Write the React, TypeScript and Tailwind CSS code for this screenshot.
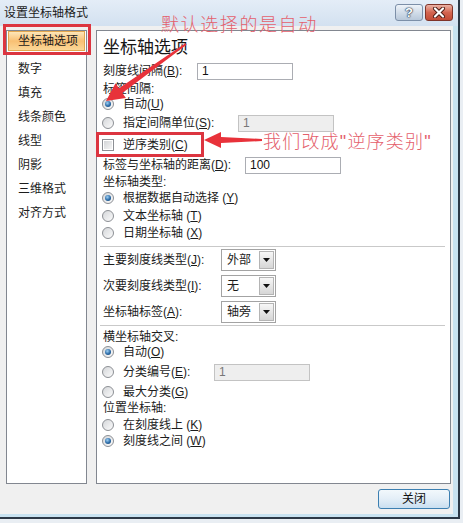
import { ReactNode } from 'react'

function Key({ k }: { k: string }) {
  return (
    <>
      (<span className="underline underline-offset-1">{k}</span>)
    </>
  )
}

function Radio({ on }: { on?: boolean }) {
  return (
    <div className="w-[12px] h-[12px] shrink-0 rounded-full border border-[#8c8f94] bg-gradient-to-br from-[#d5d7da] to-[#fbfbfb] flex items-center justify-center">
      {on && (
        <div className="w-[6px] h-[6px] rounded-full bg-[radial-gradient(circle_at_40%_35%,#9fd0f4,#2a6aa6_55%,#173f6b)]" />
      )}
    </div>
  )
}

function Check() {
  return (
    <div className="w-[12px] h-[12px] shrink-0 border border-[#8c8f94] bg-white p-px">
      <div className="w-full h-full bg-gradient-to-br from-[#d3d5d8] to-[#f5f5f5]" />
    </div>
  )
}

function Box({ v, w, off }: { v: string; w: string; off?: boolean }) {
  return (
    <div
      className={
        off
          ? `${w} h-[17px] border border-[#c3c3c3] bg-[#eeeeee] text-[#777] flex items-center pl-[4px] text-[12px]`
          : `${w} h-[17px] border border-[#abadb3] bg-white text-[#111] flex items-center pl-[4px] text-[12px]`
      }
    >
      {v}
    </div>
  )
}

function Drop({ v }: { v: string }) {
  return (
    <div className="w-[55px] h-[22px] border border-[#a3a3a3] bg-white flex p-px">
      <div className="flex-1 flex items-center pl-[4px] text-[12px]">{v}</div>
      <div className="w-[15px] border border-[#b4b4b4] bg-gradient-to-b from-[#f7f7f7] to-[#d6d6d6] flex items-center justify-center">
        <svg width="7" height="4" viewBox="0 0 7 4">
          <path d="M0 0 L7 0 L3.5 4 Z" fill="#111" />
        </svg>
      </div>
    </div>
  )
}

function RadioRow({ h, on, children }: { h: string; on?: boolean; children: ReactNode }) {
  return (
    <div className={`${h} flex items-center pl-[5px] gap-[9px]`}>
      <Radio on={on} />
      {children}
    </div>
  )
}

const items = ['数字', '填充', '线条颜色', '线型', '阴影', '三维格式', '对齐方式']

export default function App() {
  return (
    <div className="w-[463px] h-[523px] relative overflow-hidden bg-[#e9eef3] font-['Liberation_Sans','Noto_Sans_CJK_SC',sans-serif] text-[12px] leading-[16px] text-[#1c1c1c]">
      <div className="w-[460px] h-[519px] border-r-2 border-b-2 border-[#2c3846] bg-[#c8e2f0] flex flex-col">
        {/* title bar */}
        <div className="h-[26px] shrink-0 flex items-center justify-between pl-[4px] pr-[5px] bg-gradient-to-b from-[#e4edf7] to-[#d3e1f0]">
          <span className="text-[12px] text-[#1b1b1b]">设置坐标轴格式</span>
          <div className="flex gap-[2px] -mt-[2px]">
            <div className="w-[28px] h-[17px] rounded-[3px] border border-[#7c8fa8] bg-gradient-to-b from-[#eef3f9] via-[#d2dde9] to-[#b8c8da] flex items-center justify-center">
              <span className="text-white font-bold text-[13px] leading-none [text-shadow:0_0_1px_#23364f,0_0_1px_#23364f,0_0_2px_#23364f]">?</span>
            </div>
            <div className="w-[28px] h-[17px] rounded-[3px] border border-[#7f3328] bg-gradient-to-b from-[#eab2a6] via-[#d3644f] to-[#c24a35] flex items-center justify-center">
              <svg width="14" height="11" viewBox="0 0 14 11">
                <path d="M3 1.5 L11 9.5 M11 1.5 L3 9.5" stroke="#4b1b14" strokeWidth="4" strokeLinecap="round" />
                <path d="M3 1.5 L11 9.5 M11 1.5 L3 9.5" stroke="#ffffff" strokeWidth="2.2" strokeLinecap="round" />
              </svg>
            </div>
          </div>
        </div>

        {/* body */}
        <div className="flex-1 mr-[5px] mb-[3px] bg-[#f0f0f0] flex flex-col pt-[4px] pb-[4px]">
          <div className="h-[454px] flex pl-[6px] pr-[2px] gap-[9px]">
            {/* left list */}
            <div className="w-[81px] border border-[#828790] bg-white flex flex-col">
              <div className="mx-px h-[20px] flex items-center pl-[9px] border border-[#e3a74f] bg-gradient-to-b from-[#fde6b8] via-[#f8c073] to-[#fbd797] text-[#1a1a1a]">
                坐标轴选项
              </div>
              <div className="mt-[6px] flex flex-col">
                {items.map((it) => (
                  <div key={it} className="h-[24px] flex items-center pl-[11px]">
                    {it}
                  </div>
                ))}
              </div>
            </div>

            {/* right panel */}
            <div className="flex-1 border border-[#828790] bg-white flex flex-col pt-[5px]">
              <div className="h-[24px] flex items-center pl-[6px] text-[17px] leading-[24px] text-[#161616]">坐标轴选项</div>
              <div className="h-[22px] flex items-center pl-[6px]">
                <span className="w-[94px]">
                  刻度线间隔<Key k="B" />:
                </span>
                <Box v="1" w="w-[96px]" />
              </div>
              <div className="h-[14px] flex items-center pl-[6px]">标签间隔:</div>
              <RadioRow h="h-[16px]" on>
                <span>
                  自动<Key k="U" />
                </span>
              </RadioRow>
              <RadioRow h="h-[22px]">
                <span className="w-[106px]">
                  指定间隔单位<Key k="S" />:
                </span>
                <Box v="1" w="w-[96px]" off />
              </RadioRow>
              <div className="h-[22px] flex items-center pl-[5px] gap-[9px]">
                <Check />
                <span>
                  逆序类别<Key k="C" />
                </span>
              </div>
              <div className="h-[18px] flex items-center pl-[6px]">
                <span className="w-[142px]">
                  标签与坐标轴的距离<Key k="D" />:
                </span>
                <Box v="100" w="w-[96px]" />
              </div>
              <div className="h-[16px] flex items-center pl-[6px]">坐标轴类型:</div>
              <RadioRow h="h-[16px]" on>
                <span>
                  根据数据自动选择 <Key k="Y" />
                </span>
              </RadioRow>
              <RadioRow h="h-[20px]">
                <span>
                  文本坐标轴 <Key k="T" />
                </span>
              </RadioRow>
              <RadioRow h="h-[14px]">
                <span>
                  日期坐标轴 <Key k="X" />
                </span>
              </RadioRow>
              <div className="mt-[6px] mb-[2px] ml-[3px] mr-[5px] h-px bg-[#c9c9c9]" />
              <div className="h-[22px] flex items-center pl-[6px]">
                <span className="w-[118px]">
                  主要刻度线类型<Key k="J" />:
                </span>
                <Drop v="外部" />
              </div>
              <div className="mt-[4px] h-[22px] flex items-center pl-[6px]">
                <span className="w-[118px]">
                  次要刻度线类型<Key k="I" />:
                </span>
                <Drop v="无" />
              </div>
              <div className="mt-[4px] h-[22px] flex items-center pl-[6px]">
                <span className="w-[118px]">
                  坐标轴标签<Key k="A" />:
                </span>
                <Drop v="轴旁" />
              </div>
              <div className="mt-[2px] ml-[3px] mr-[5px] h-px bg-[#c9c9c9]" />
              <div className="mt-[2px] h-[18px] flex items-center pl-[6px]">横坐标轴交叉:</div>
              <RadioRow h="h-[12px]" on>
                <span>
                  自动<Key k="O" />
                </span>
              </RadioRow>
              <RadioRow h="h-[28px]">
                <span className="w-[82px]">
                  分类编号<Key k="E" />:
                </span>
                <Box v="1" w="w-[96px]" off />
              </RadioRow>
              <RadioRow h="h-[12px]">
                <span>
                  最大分类<Key k="G" />
                </span>
              </RadioRow>
              <div className="h-[20px] flex items-center pl-[6px]">位置坐标轴:</div>
              <RadioRow h="h-[14px]">
                <span>
                  在刻度线上 <Key k="K" />
                </span>
              </RadioRow>
              <RadioRow h="h-[18px]" on>
                <span>
                  刻度线之间 <Key k="W" />
                </span>
              </RadioRow>
            </div>
          </div>

          <div className="mt-[5px] flex justify-end pr-[3px]">
            <div className="w-[72px] h-[20px] rounded-[3px] border border-[#3c7fb1] bg-gradient-to-b from-[#f2f8fc] via-[#e3eef7] to-[#c9dff0] flex items-center justify-center text-[12px] text-[#111]">
              关闭
            </div>
          </div>
        </div>
      </div>

      {/* annotations */}
      <div className="absolute left-[3px] top-[24px] w-[88px] h-[31px] border-[3px] border-[#dc3540]" />
      <div className="absolute left-[96px] top-[132px] w-[108px] h-[25px] border-[3px] border-[#dc3540]" />
      <div className="absolute left-[161px] top-[11px] text-[18px] leading-[24px] tracking-[1.6px] font-light text-[#e4606c] font-['Noto_Sans_CJK_SC',sans-serif]">
        默认选择的是自动
      </div>
      <div className="absolute left-[263px] top-[128px] text-[18px] leading-[24px] tracking-[1.2px] font-light text-[#e4606c] font-['Noto_Sans_CJK_SC',sans-serif]">
        我们改成<span className="font-['Liberation_Sans',sans-serif]">"</span>逆序类别<span className="font-['Liberation_Sans',sans-serif]">"</span>
      </div>
      <svg className="absolute left-0 top-0 pointer-events-none" width="463" height="523" viewBox="0 0 463 523">
        <polygon
          points="186.6,44.8 122.4,93 125.9,97.9 106,101 115.5,83.3 119,88.2 185.4,43.2"
          fill="#e8323a"
        />
        <polygon points="262,139 221,137 221,132 204,140 221,148 221,143 262,141" fill="#e8323a" />
      </svg>
    </div>
  )
}
